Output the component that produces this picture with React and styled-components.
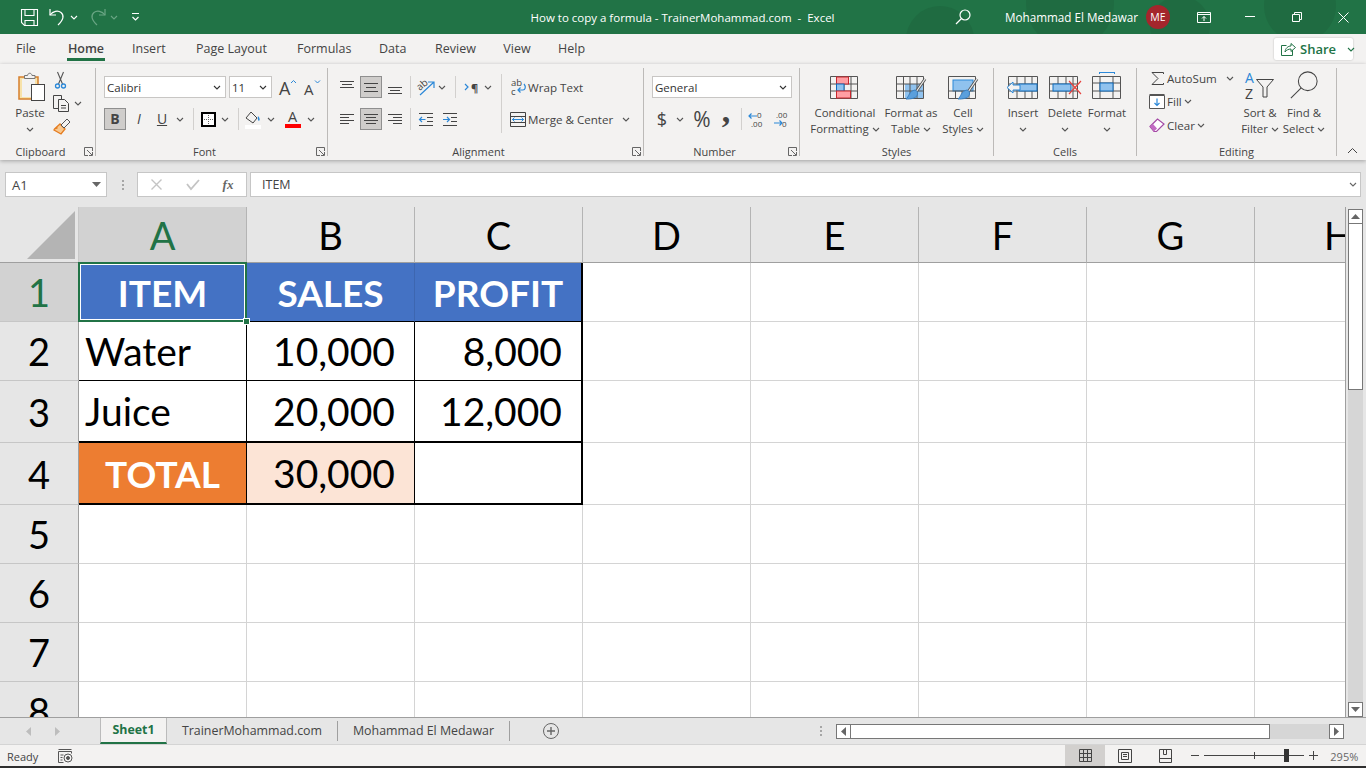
import React from 'react'
import styled, { createGlobalStyle } from 'styled-components'

const GlobalStyle = createGlobalStyle`
  html, body {
    margin: 0;
    padding: 0;
    background: #e6e6e6;
  }
  * { box-sizing: border-box; }
  svg { overflow: visible; }
`

const UI_FONT = '"Open Sans", "Noto Sans", sans-serif'
const CELL_FONT = 'Lato, "Open Sans", sans-serif'
const GREEN = '#217346'
const INK = '#444444'
const BLUE = '#2b88d8'
const PALE = '#90c2ee'

const Window = styled.div`
  width: 1366px;
  height: 768px;
  overflow: hidden;
  display: flex;
  flex-direction: column;
  font-family: ${UI_FONT};
  font-size: 12px;
  color: ${INK};
  background: #e6e6e6;
`

/* title bar */
const TitleBar = styled.div`
  position: relative;
  height: 34px;
  flex: none;
  display: flex;
  align-items: center;
  background: ${GREEN};
  color: #fff;
  overflow: hidden;
`
const TitleDecor = styled.svg`
  position: absolute;
  left: 880px;
  top: 0;
  overflow: hidden;
`
const QuickAccess = styled.div`
  position: relative;
  width: 530px;
  display: flex;
  align-items: center;
`
const Slot = styled.div`
  position: relative;
  flex: none;
  width: ${p => p.$w}px;
  margin-left: ${p => p.$ml || 0}px;
  display: flex;
  align-items: center;
  justify-content: center;
  height: ${p => (p.$h ? `${p.$h}px` : 'auto')};
`
const TitleText = styled.div`
  position: relative;
  width: 305px;
  font-size: 11.5px;
  white-space: pre;
  text-align: center;
`
const UserName = styled.div`
  position: relative;
  width: 130px;
  margin-left: 33px;
  font-size: 11.7px;
  white-space: nowrap;
`
const Avatar = styled.div`
  position: relative;
  width: 24px;
  height: 24px;
  margin-left: 11px;
  border-radius: 50%;
  background: #a4262c;
  font-size: 10.5px;
  display: flex;
  align-items: center;
  justify-content: center;
`

/* tab row */
const TabRow = styled.div`
  height: 30px;
  flex: none;
  display: flex;
  align-items: flex-start;
  background: #f3f2f1;
`
const Tab = styled.div`
  position: relative;
  flex: none;
  width: ${p => p.$w}px;
  margin-left: ${p => p.$ml}px;
  height: 27px;
  padding-top: 5px;
  text-align: center;
  white-space: nowrap;
  font-size: 12.5px;
  line-height: 20px;
  font-weight: ${p => (p.$active ? 600 : 400)};
  color: #444;
  border-bottom: ${p => (p.$active ? `3px solid ${GREEN}` : 'none')};
`
const ShareButton = styled.div`
  margin-left: auto;
  margin-right: 13px;
  margin-top: 4px;
  width: 79px;
  height: 22px;
  background: #fff;
  border-radius: 2px;
  box-shadow: 0 0 2px rgba(0, 0, 0, 0.25);
  display: flex;
  align-items: center;
  padding-left: 7px;
  gap: 4px;
  color: ${GREEN};
  font-weight: 600;
  font-size: 13px;
`

/* ribbon */
const Ribbon = styled.div`
  position: relative;
  height: 96px;
  flex: none;
  display: flex;
  background: #f3f2f1;
  box-shadow: 0 1px 4px rgba(0, 0, 0, 0.3);
`
const Group = styled.div`
  flex: none;
  width: ${p => p.$w}px;
  display: flex;
  flex-direction: column;
`
const GroupBody = styled.div`
  height: 80px;
  display: flex;
`
const GroupFoot = styled.div`
  display: grid;
  grid-template-columns: ${p => (p.$plain ? '1fr' : '1fr auto')};
  align-items: center;
  height: 15px;
  font-size: 11px;
  text-align: center;
  color: #444;
`
const Launcher = styled.div`
  width: 14px;
  display: flex;
  justify-content: center;
`
const GroupLine = styled.div`
  flex: none;
  width: 1px;
  margin: 4px 0 4px;
  background: #bcbab8;
`
const Stack = styled.div`
  display: flex;
  flex-direction: column;
  gap: ${p => p.$gap ?? 10}px;
  padding-top: ${p => p.$top ?? 12}px;
  width: ${p => (p.$w ? `${p.$w}px` : 'auto')};
  margin-left: ${p => p.$ml || 0}px;
  flex: none;
`
const ToolRow = styled.div`
  display: flex;
  align-items: center;
  height: ${p => p.$h || 22}px;
`
const Pressed = styled(Slot)`
  height: 22px;
  background: #cfcdcb;
  border: 1px solid #8f8f8f;
`
const ToolSep = styled.div`
  flex: none;
  width: 1px;
  height: 22px;
  margin-left: ${p => p.$ml || 0}px;
  background: #d2d0ce;
`
const TallSep = styled.div`
  flex: none;
  width: 1px;
  height: 59px;
  margin-top: 10px;
  background: #d2d0ce;
`
const Combo = styled.div`
  flex: none;
  width: ${p => p.$w}px;
  margin-left: ${p => p.$ml || 0}px;
  height: 22px;
  background: #fff;
  border: 1px solid #c8c6c4;
  display: flex;
  align-items: center;
  justify-content: space-between;
  padding: 0 4px 0 2px;
  font-size: 11.5px;
  color: #333;
`
const ToolText = styled.span`
  margin-left: ${p => p.$ml ?? 2}px;
  font-size: 11.6px;
  white-space: nowrap;
  color: #444;
`
const PasteLabel = styled.div`
  margin-top: 4px;
  font-size: 11.6px;
  line-height: 16px;
  text-align: center;
  color: #444;
`
const BigButton = styled.div`
  flex: none;
  width: ${p => p.$w}px;
  margin-left: ${p => p.$ml || 0}px;
  padding-top: ${p => p.$pt ?? 12}px;
  display: flex;
  flex-direction: column;
  align-items: center;
  font-size: 11.4px;
  line-height: 16px;
  white-space: nowrap;
  color: #444;
`
const BigIcon = styled.div`
  height: ${p => p.$h || 24}px;
  margin-bottom: 5px;
  display: flex;
  justify-content: center;
`
const ChevLine = styled.div`
  height: 16px;
  display: flex;
  align-items: center;
  justify-content: center;
  gap: 3px;
`
const Glyph = styled.span`
  font-size: ${p => p.$size}px;
  font-weight: ${p => p.$weight || 400};
  font-style: ${p => (p.$italic ? 'italic' : 'normal')};
  font-family: ${p => p.$font || 'inherit'};
  color: ${p => p.$color || '#444'};
  line-height: 1;
  text-decoration: ${p => (p.$under ? 'underline' : 'none')};
`
const CommaGlyph = styled(Glyph)`
  margin-top: -16px;
`

/* formula bar */
const FormulaBar = styled.div`
  height: 47px;
  flex: none;
  display: flex;
  align-items: flex-start;
  padding-top: 12px;
  background: #e6e6e6;
`
const FieldBox = styled.div`
  flex: none;
  height: 25px;
  width: ${p => (p.$w ? `${p.$w}px` : 'auto')};
  margin-left: ${p => p.$ml || 0}px;
  background: #fff;
  border: 1px solid #c6c6c6;
  display: flex;
  align-items: center;
  font-size: 13px;
  color: #444;
`
const NameBox = styled(FieldBox)`
  justify-content: space-between;
  padding: 0 5px 0 6px;
`
const FormulaInput = styled(FieldBox)`
  flex-grow: 1;
  margin-right: 5px;
  padding: 0 3px 0 11px;
  justify-content: space-between;
  font-size: 12.5px;
`
const Dots = styled.div`
  flex: none;
  width: 2px;
  height: 10px;
  margin-top: 8px;
  margin-left: ${p => p.$ml}px;
  background: repeating-linear-gradient(#a6a6a6 0 2px, transparent 2px 4px);
`

/* sheet */
const SheetArea = styled.div`
  flex: none;
  height: 510px;
  display: flex;
`
const Grid = styled.div`
  width: 1346px;
  height: 510px;
  overflow: hidden;
  display: grid;
  grid-template-columns: 79px repeat(8, 168px);
  grid-template-rows: 56px 59px 59px 62px 62px 59px 59px 59px 59px;
  background: #fff;
  border-right: 1px solid #9f9f9f;
`
const Corner = styled.div`
  background: #e6e6e6;
  border-right: 1px solid #c8c8c8;
  border-bottom: 1px solid #9f9f9f;
  padding: 4px 3px 3px 27px;
  svg { display: block; }
`
const ColHead = styled.div`
  background: ${p => (p.$active ? '#d2d2d2' : '#e6e6e6')};
  color: ${p => (p.$active ? GREEN : '#000')};
  border-right: 1px solid #b4b4b4;
  border-bottom: 1px solid #9f9f9f;
  font-family: ${CELL_FONT};
  font-size: 38px;
  display: flex;
  align-items: center;
  justify-content: center;
`
const RowHead = styled.div`
  background: ${p => (p.$active ? '#d2d2d2' : '#e6e6e6')};
  color: ${p => (p.$active ? GREEN : '#000')};
  border-right: 1px solid #9f9f9f;
  border-bottom: 1px solid #c6c6c6;
  font-family: ${CELL_FONT};
  font-size: 38px;
  display: flex;
  align-items: center;
  justify-content: center;
`
const Cell = styled.div`
  position: relative;
  z-index: ${p => (p.$selected ? 2 : 0)};
  background: ${p => p.$bg || '#fff'};
  color: ${p => p.$color || '#000'};
  border-right: ${p => p.$rw || 1}px solid ${p => p.$rc || '#d4d4d4'};
  border-bottom: ${p => p.$bw || 1}px solid ${p => p.$bc || '#d4d4d4'};
  font-family: ${CELL_FONT};
  font-size: ${p => (p.$bold ? 37 : 39)}px;
  font-weight: ${p => (p.$bold ? 700 : 400)};
  display: flex;
  align-items: center;
  justify-content: ${p => (p.$align === 'right' ? 'flex-end' : p.$align === 'center' ? 'center' : 'flex-start')};
  padding: 0 ${p => (p.$align === 'right' ? 19 : 0)}px 0 ${p => (p.$align === 'left' ? 6 : 0)}px;
  white-space: nowrap;
`
const Selection = styled.div`
  position: absolute;
  left: -1px;
  top: -1px;
  right: -1px;
  bottom: -1px;
  border: 2px solid ${GREEN};
  box-shadow: inset 0 0 0 1px #fff;
`
const FillHandle = styled.div`
  position: absolute;
  right: -5px;
  bottom: -5px;
  width: 7px;
  height: 7px;
  background: ${GREEN};
  border: 1px solid #fff;
`
const VScroll = styled.div`
  flex: none;
  width: 20px;
  display: flex;
  flex-direction: column;
  padding: 2px 3px 0 2px;
`
const ScrollButton = styled.div`
  flex: none;
  width: 15px;
  height: 15px;
  background: #fff;
  border: 1px solid #777;
  display: flex;
  align-items: center;
  justify-content: center;
`
const VThumb = styled.div`
  flex: none;
  height: 166px;
  background: #fff;
  border: 1px solid #777;
  border-top: none;
`
const VTrack = styled.div`
  flex: 1;
  background: #d6d6d6;
`

/* sheet tabs */
const SheetTabs = styled.div`
  height: 28px;
  flex: none;
  display: flex;
  align-items: flex-start;
  background: #e6e6e6;
  border-top: 1px solid #9f9f9f;
  border-bottom: 1px solid #d4d4d4;
`
const SheetTab = styled.div`
  flex: none;
  width: ${p => p.$w}px;
  margin-left: ${p => p.$ml || 0}px;
  height: ${p => (p.$active ? '26px' : '20px')};
  margin-top: ${p => (p.$active ? '0' : '3px')};
  padding-bottom: ${p => (p.$active ? '1px' : '0')};
  display: flex;
  align-items: center;
  justify-content: center;
  font-size: 12.4px;
  line-height: 16px;
  white-space: nowrap;
  color: ${p => (p.$active ? GREEN : '#444')};
  font-weight: ${p => (p.$active ? 700 : 400)};
  background: ${p => (p.$active ? '#f3f2f1' : 'transparent')};
  border-left: ${p => (p.$active ? '1px solid #bbb' : 'none')};
  border-right: ${p => (p.$active ? '1px solid #bbb' : '1px solid #9f9f9f')};
  border-bottom: ${p => (p.$active ? `2px solid ${GREEN}` : 'none')};
`
const HScroll = styled.div`
  flex: none;
  width: 508px;
  height: 15px;
  margin-left: 14px;
  margin-top: 6px;
  display: flex;
`
const HThumb = styled.div`
  flex: none;
  width: 419px;
  background: #fff;
  border: 1px solid #777;
  border-left: none;
`
const HTrack = styled.div`
  flex: 1;
  background: #d6d6d6;
`

/* status bar */
const StatusBar = styled.div`
  height: 21px;
  flex: none;
  display: flex;
  align-items: center;
  background: #f3f2f1;
  font-size: 11px;
`
const StatusText = styled.span`
  margin-left: ${p => p.$ml}px;
  padding-top: 2px;
  font-size: 11px;
  white-space: nowrap;
  color: ${p => p.$color || '#444'};
`
const ViewButton = styled(Slot)`
  height: 21px;
  background: ${p => (p.$active ? '#d2d0ce' : 'transparent')};
`
const ZoomTrack = styled.div`
  position: relative;
  flex: none;
  width: 100px;
  height: 1px;
  margin-left: 5px;
  background: #444;
`
const ZoomTick = styled.div`
  position: absolute;
  left: 50px;
  top: -3px;
  width: 1px;
  height: 7px;
  background: #444;
`
const ZoomThumb = styled.div`
  position: absolute;
  left: 80px;
  top: -6px;
  width: 5px;
  height: 13px;
  background: #333;
`
const BottomEdge = styled.div`
  height: 2px;
  flex: none;
  background: #2f2f2f;
`

/* icons */
const Chev = ({ color = '#555' }) => (
  <svg width="8" height="5" viewBox="0 0 8 5" fill="none">
    <path d="M1 1l3 3 3-3" stroke={color} strokeWidth="1.1" />
  </svg>
)

const LaunchIcon = () => (
  <svg width="9" height="9" viewBox="0 0 9 9" fill="none" stroke="#666">
    <path d="M8.5 4V.5H.5v8H4" />
    <path d="M3 3l5 5M8.5 5v3.5H5" />
  </svg>
)

const SaveIcon = () => (
  <svg width="17" height="17" viewBox="0 0 17 17" fill="none" stroke="#fff" strokeWidth="1.1">
    <path d="M.5.5h16v16H3.5l-3-3z" />
    <path d="M4 .5v6h9v-6M4 16.5v-5h9v5" />
  </svg>
)
const UndoIcon = ({ color = '#fff' }) => (
  <svg width="18" height="18" viewBox="0 0 18 18" fill="none" stroke={color} strokeWidth="1.2">
    <path d="M1 1v6h6" />
    <path d="M1 7c3-4 8-5 11-2.500 3.500 3 2.500 7-3 12.500" />
  </svg>
)
const RedoIcon = ({ color }) => (
  <svg width="18" height="18" viewBox="0 0 18 18" fill="none" stroke={color} strokeWidth="1.2">
    <path d="M17 1v6h-6" />
    <path d="M17 7c-3-4-8-5-11-2.500-3.500 3-2.500 7 3 12.500" />
  </svg>
)
const CustomizeIcon = () => (
  <svg width="9" height="9" viewBox="0 0 9 9" fill="none" stroke="#fff">
    <path d="M1 .5h7" />
    <path d="M1.500 4l3 3 3-3" strokeWidth="1.2" />
  </svg>
)
const SearchIcon = ({ size = 16, color = '#fff', sw = 1.2 }) => (
  <svg width={size} height={size} viewBox="0 0 16 16" fill="none" stroke={color} strokeWidth={sw}>
    <circle cx="10" cy="6" r="5" />
    <path d="M6.500 9.500L1 15" />
  </svg>
)
const RibbonModeIcon = () => (
  <svg width="14" height="11" viewBox="0 0 14 11" fill="none" stroke="#fff">
    <path d="M.5.500h13v10H.5zM.5 2.500h13M7 9V4.500M5 6.500l2-2 2 2" />
  </svg>
)
const MinIcon = ({ color = '#fff', w = 10 }) => (
  <svg width={w} height="2" viewBox={`0 0 ${w} 2`}><path d={`M0 .5h${w}`} stroke={color} /></svg>
)
const RestoreIcon = () => (
  <svg width="10" height="10" viewBox="0 0 10 10" fill="none" stroke="#fff">
    <path d="M.5 2.500h7v7h-7zM2.500 2.500v-2h7v7h-2" />
  </svg>
)
const CloseIcon = () => (
  <svg width="11" height="11" viewBox="0 0 11 11" fill="none" stroke="#fff">
    <path d="M.5.500l10 10M10.500.500l-10 10" />
  </svg>
)
const ShareIcon = () => (
  <svg width="15" height="14" viewBox="0 0 15 14" fill="none" stroke={GREEN}>
    <path d="M5.500 3.500h-5v10h11V8" />
    <path d="M4 10c.5-4 3-6 6-6V1.500l4.500 4-4.500 4V7c-2.500 0-4.500 1-6 3z" />
  </svg>
)

const PasteIcon = () => (
  <svg width="28" height="30" viewBox="0 0 28 30" fill="none">
    <rect x="1" y="6" width="19" height="22" fill="#f7e2a9" stroke="#d67f2c" strokeWidth="1.5" />
    <rect x="4" y="8" width="13" height="18" fill="#f3f2f1" />
    <path d="M6.500 7.500V4.500h3c.5-3 4-3 4.500 0h3v3z" fill="#f3f2f1" stroke="#777" />
    <rect x="13.500" y="13.500" width="13" height="16" fill="#fff" stroke="#444" />
  </svg>
)
const ScissorsIcon = () => (
  <svg width="11" height="17" viewBox="0 0 11 17" fill="none">
    <path d="M2.500 0l5 12M8.500 0l-5 12" stroke="#555" strokeWidth="1.100" />
    <circle cx="2.500" cy="14" r="2" stroke={BLUE} strokeWidth="1.300" />
    <circle cx="8.500" cy="14" r="2" stroke={BLUE} strokeWidth="1.300" />
  </svg>
)
const CopyIcon = () => (
  <svg width="17" height="17" viewBox="0 0 17 17" fill="#f3f2f1" stroke="#444">
    <path d="M.5.500h8v13h-8z" />
    <path d="M5.500 4.500h6l4 4v8h-10z" />
    <path d="M8 10.500h5M8 13h5" />
  </svg>
)
const BrushIcon = () => (
  <svg width="18" height="17" viewBox="0 0 18 17" fill="none">
    <path d="M7 6l5 5-4 5-7-4 .5-1 3-1-2 0z" fill="#f8c88f" stroke="#e57c1f" strokeWidth="1.300" />
    <path d="M8 7l6-6 3 3-6 6z" fill="#f3f2f1" stroke="#555" />
  </svg>
)
const GrowIcon = ({ up }) => (
  <svg width="16" height="17" viewBox="0 0 16 17" fill="none">
    <text x="0" y="16" fontSize={up ? 18 : 15} fontFamily="'Open Sans', sans-serif" fill="#444">A</text>
    <path d={up ? 'M12 4l2.500-2.500L17 4' : 'M11 1.500l2.500 2.500L16 1.500'} stroke={BLUE} />
  </svg>
)
const BorderIcon = () => (
  <svg width="15" height="15" viewBox="0 0 15 15" fill="#fff">
    <rect x="1" y="1" width="13" height="13" stroke="#000" strokeWidth="2" />
    <path d="M7.500 3v9M3 7.500h9" stroke="#666" strokeDasharray="1 1" />
  </svg>
)
const FillIcon = () => (
  <svg width="17" height="19" viewBox="0 0 17 19" fill="none">
    <path d="M1 8l5-6 6 6-4 5z" stroke="#444" />
    <path d="M13 6c2 2 2 4 1 5-1 0-1.500-3-1-5z" fill={BLUE} />
    <rect x="0" y="15" width="16" height="4" fill="#fff" />
  </svg>
)
const FontColorIcon = () => (
  <svg width="16" height="18" viewBox="0 0 16 18" fill="none">
    <text x="3" y="12" fontSize="14.500" fontFamily="'Open Sans', sans-serif" fill="#444">A</text>
    <rect x="0" y="14" width="16" height="4" fill="#f00" />
  </svg>
)

const Lines = ({ w = 14, rows }) => (
  <svg width={w} height="15" viewBox={`0 0 ${w} 15`} stroke="#444" fill="none">
    {rows.map(([y, a, b]) => <path key={y} d={`M${a} ${y + 0.5}H${b}`} />)}
  </svg>
)
const OrientIcon = () => (
  <svg width="18" height="17" viewBox="0 0 18 17" fill="none">
    <text x="0" y="9" fontSize="10" fontFamily="'Open Sans', sans-serif" fill="#444" transform="rotate(-40 5 8)">ab</text>
    <path d="M2 16L16 3M10 3h6v6" stroke={BLUE} strokeWidth="1.200" />
  </svg>
)
const IndentMark = () => (
  <svg width="14" height="13" viewBox="0 0 14 13" fill="none">
    <path d="M0 3l3 3-3 3" stroke={BLUE} strokeWidth="1.200" />
    <text x="6" y="11" fontSize="11" fontWeight="700" fontFamily="'Open Sans', sans-serif" fill="#444">¶</text>
  </svg>
)
const IndentIcon = ({ flip }) => (
  <svg width="14" height="15" viewBox="0 0 14 15" fill="none">
    <path d="M0 1.500h14M0 13.500h14" stroke="#444" />
    <path d="M8 5.500h6M8 9.500h6" stroke="#444" />
    <path d={flip ? 'M0 7.500h6M4 5l2.500 2.500L4 10' : 'M6.500 7.500h-6M3 5L.5 7.500 3 10'} stroke={BLUE} strokeWidth="1.200" />
  </svg>
)
const WrapIcon = () => (
  <svg width="15" height="18" viewBox="0 0 15 18" fill="none">
    <text x="0" y="8" fontSize="9.500" fontFamily="'Open Sans', sans-serif" fill="#444">ab</text>
    <text x="0" y="17" fontSize="9.500" fontFamily="'Open Sans', sans-serif" fill="#444">c</text>
    <path d="M13 6c2.500 3 1 6-1 6H7M9.500 9.500L7 12l2.500 2.500" stroke={BLUE} strokeWidth="1.200" />
  </svg>
)
const MergeIcon = () => (
  <svg width="16" height="15" viewBox="0 0 16 15" fill="none">
    <path d="M.5.500h15v14H.5zM.5 4.500h15M.5 10.500h15" stroke="#444" />
    <path d="M2 7.500h12M4.500 5.500l-2 2 2 2M11.500 5.500l2 2-2 2" stroke={BLUE} />
  </svg>
)
const DecimalIcon = ({ more }) => (
  <svg width="18" height="17" viewBox="0 0 18 17" fill="none">
    <text x={more ? 3 : 9} y="7" fontSize="8" fontFamily="'Open Sans', sans-serif" fill="#444">{more ? '.00' : '0'}</text>
    <text x={more ? 9 : 3} y="16" fontSize="8" fontFamily="'Open Sans', sans-serif" fill="#444">{more ? '0' : '.00'}</text>
    <path d={more ? 'M1 12h8M6.500 9.500L9 12l-2.500 2.500' : 'M9 5H1M3.500 2.500L1 5l2.500 2.500'} stroke={BLUE} strokeWidth="1.200" />
  </svg>
)

const TableGrid = ({ children, w = 28, h = 23 }) => (
  <svg width={w + 2} height={h + 1} viewBox={`0 0 ${w + 2} ${h + 1}`} fill="none">
    {children}
  </svg>
)
const gridLines = 'M.5.500h27v22H.5zM.5 8h27M.5 15h27M7.500.500v22M14 .500v22M21 .500v22'

const CondIcon = () => (
  <TableGrid>
    <path d={gridLines} stroke="#555" />
    <rect x="6.500" y="1" width="12" height="7" fill="#ff9ea3" stroke="#c8282e" />
    <rect x="6.500" y="8" width="7.500" height="7" fill={PALE} stroke="#0f6cbd" />
    <rect x="6.500" y="15" width="14" height="7" fill="#ff9ea3" stroke="#c8282e" />
  </TableGrid>
)
const PaintOver = () => (
  <>
    <path d="M29 3L20 16" stroke="#555" strokeWidth="3" />
    <path d="M29 3L20 16" stroke="#f3f2f1" strokeWidth="1.200" />
    <path d="M19 14c4 1 3 7-1 8-3 1-6 1-8 1 3-2 3-8 9-9z" fill="#5a9fdc" stroke="#3a7fc0" />
  </>
)
const TableStyleIcon = () => (
  <TableGrid>
    <rect x="9" y="8" width="18" height="15" fill={PALE} />
    <path d={gridLines} stroke="#555" />
    <PaintOver />
  </TableGrid>
)
const CellStyleIcon = () => (
  <TableGrid>
    <rect x="5" y="4" width="20" height="11" fill={PALE} stroke={BLUE} />
    <path d="M.5.500h27v22H.5zM.5 15h27M7.500 15v8M14 15v8M21 15v8" stroke="#555" />
    <PaintOver />
  </TableGrid>
)
const InsertIcon = () => (
  <TableGrid w={30}>
    <path d="M1.500 .5h29v22h-29zM1.500 8h29M1.500 15h29M10 1v21M18 1v21M25 1v21" stroke="#555" />
    <rect x="12" y="8" width="18" height="7" fill={PALE} stroke="#0f6cbd" />
    <path d="M0 11.500L6 6v3h7v5H6v3z" fill="#f3f2f1" stroke={BLUE} />
  </TableGrid>
)
const DeleteIcon = () => (
  <TableGrid w={30}>
    <path d="M.5 .5h28v22H.5zM.5 8h28M.5 15h28M9 1v21M17 1v21M24 1v21" stroke="#555" />
    <rect x="4" y="8" width="18" height="7" fill={PALE} stroke="#0f6cbd" />
    <path d="M20 5l12 13M32 5L20 18" stroke="#e8433f" strokeWidth="1.200" />
  </TableGrid>
)
const FormatSvg = styled.svg`
  margin-top: -4px;
`
const FormatIcon = () => (
  <FormatSvg width="30" height="28" viewBox="0 0 30 28" fill="none">
    <path d="M7.500 .5h15M7.500 0v2M22.500 0v2" stroke={BLUE} />
    <path d="M.5 4.500h28v22H.5zM.5 11h28M.5 19h28M8 4v23M21 4v23" stroke="#555" />
    <rect x="8" y="11" width="13" height="8" fill={PALE} stroke="#0f6cbd" />
  </FormatSvg>
)
const SumIcon = () => (
  <svg width="13" height="13" viewBox="0 0 13 13" fill="none" stroke="#444">
    <path d="M12.500 2V.5H1L7 6.500 1 12.500h11.500V11" />
  </svg>
)
const FillDownIcon = () => (
  <svg width="16" height="15" viewBox="0 0 16 15" fill="none">
    <path d="M.5 1.500h15v13H.5z" stroke="#555" fill="#fff" />
    <path d="M.5.500h15" stroke="#555" />
    <path d="M8 4.500v7M5.500 9L8 11.500 10.500 9" stroke={BLUE} strokeWidth="1.200" />
  </svg>
)
const EraserIcon = () => (
  <svg width="16" height="14" viewBox="0 0 16 14" fill="none">
    <path d="M1 8.500L8.500 1l6.500 5-7.500 7.500H5z" fill="#fff" stroke="#a349a4" strokeWidth="1.200" />
    <path d="M1 8.500L5 13.500 8 10.500 4 6z" fill="#c26cc3" />
  </svg>
)
const SortIcon = () => (
  <svg width="30" height="30" viewBox="0 0 30 30" fill="none">
    <text x="0" y="13" fontSize="14" fontFamily="'Open Sans', sans-serif" fill={BLUE}>A</text>
    <text x="0" y="29" fontSize="14" fontFamily="'Open Sans', sans-serif" fill="#444">Z</text>
    <path d="M11.500 9.500h17l-6.500 7.500v10h-4V17z" stroke="#444" />
  </svg>
)

const NormalIcon = () => (
  <svg width="13" height="13" viewBox="0 0 13 13" fill="none" stroke="#444">
    <path d="M.5.500h12v12H.5zM.5 4.500h12M.5 8.500h12M4.500.500v12M8.500.500v12" />
  </svg>
)
const PageIcon = () => (
  <svg width="14" height="14" viewBox="0 0 14 14" fill="none" stroke="#444">
    <path d="M.5.500h13v13H.5zM3.500 3.500h7v7h-7zM5 5.500h4M5 7.500h4" />
  </svg>
)
const BreakIcon = () => (
  <svg width="13" height="14" viewBox="0 0 13 14" fill="none" stroke="#444">
    <path d="M.5.500h12v13H.5zM.5 9.500h12M4.500.500v5h3v-5" />
  </svg>
)
const MacroIcon = () => (
  <svg width="15" height="14" viewBox="0 0 15 14" fill="none" stroke="#555">
    <path d="M.5.500h13M.5 2.500h13v2M.5 2.500v11h5M2.500 6h3M2.500 8.500h2M2.500 11h2" />
    <circle cx="10" cy="9" r="4" />
    <circle cx="10" cy="9" r="1.500" fill="#555" />
  </svg>
)
const PlusIcon = () => (
  <svg width="9" height="9" viewBox="0 0 9 9"><path d="M0 4.500h9M4.500 0v9" stroke="#444" /></svg>
)
const Tri = ({ dir, color = '#666' }) => {
  const d = { up: 'M0 5L4.500 0 9 5z', down: 'M0 0h9L4.500 5z', left: 'M5 0v9L0 4.500z', right: 'M0 0v9l5-4.500z' }[dir]
  const wide = dir === 'up' || dir === 'down'
  return (
    <svg width={wide ? 9 : 5} height={wide ? 5 : 9} viewBox={wide ? '0 0 9 5' : '0 0 5 9'}>
      <path d={d} fill={color} />
    </svg>
  )
}

const TABS = [
  ['File', 16, 20],
  ['Home', 31, 38],
  ['Insert', 27, 33],
  ['Page Layout', 30, 73],
  ['Formulas', 29, 53],
  ['Data', 29, 27],
  ['Review', 29, 41],
  ['View', 27, 28],
  ['Help', 27, 27],
]

const COLS = ['A', 'B', 'C', 'D', 'E', 'F', 'G', 'H']

const black = { $rc: '#000', $bc: '#000' }

const TABLE = [
  [
    { text: 'ITEM', $bg: '#4472c4', $color: '#fff', $bold: true, $align: 'center', $rc: '#4472c4', $bc: '#000', $selected: true },
    { text: 'SALES', $bg: '#4472c4', $color: '#fff', $bold: true, $align: 'center', $rc: '#3d66b0', $bc: '#000' },
    { text: 'PROFIT', $bg: '#4472c4', $color: '#fff', $bold: true, $align: 'center', $rc: '#000', $rw: 2, $bc: '#000' },
  ],
  [
    { text: 'Water', $align: 'left', ...black },
    { text: '10,000', $align: 'right', ...black },
    { text: '8,000', $align: 'right', ...black, $rw: 2 },
  ],
  [
    { text: 'Juice', $align: 'left', ...black, $bw: 2 },
    { text: '20,000', $align: 'right', ...black, $bw: 2 },
    { text: '12,000', $align: 'right', ...black, $rw: 2, $bw: 2 },
  ],
  [
    { text: 'TOTAL', $bg: '#ed7d31', $color: '#fff', $bold: true, $align: 'center', ...black, $bw: 2 },
    { text: '30,000', $bg: '#fce4d6', $align: 'right', ...black, $bw: 2 },
    { text: '', ...black, $rw: 2, $bw: 2 },
  ],
]

const RibbonBar = () => (
  <Ribbon>
    <Group $w={95}>
      <GroupBody>
        <Stack $w={30} $ml={15} $top={7} $gap={0}>
          <Slot $w={28} $ml={3} $h={30}><PasteIcon /></Slot>
          <PasteLabel>Paste</PasteLabel>
          <ChevLine><Chev /></ChevLine>
        </Stack>
        <Stack $ml={8} $top={8} $gap={6}>
          <ToolRow $h={17}><Slot $w={15}><ScissorsIcon /></Slot></ToolRow>
          <ToolRow $h={17}><Slot $w={17}><CopyIcon /></Slot><Slot $w={8} $ml={4}><Chev /></Slot></ToolRow>
          <ToolRow $h={17}><Slot $w={18}><BrushIcon /></Slot></ToolRow>
        </Stack>
      </GroupBody>
      <GroupFoot><span>Clipboard</span><Launcher><LaunchIcon /></Launcher></GroupFoot>
    </Group>
    <GroupLine />

    <Group $w={231}>
      <GroupBody>
        <Stack>
          <ToolRow>
            <Combo $w={122} $ml={8}><span>Calibri</span><Chev color="#333" /></Combo>
            <Combo $w={43} $ml={3}><span>11</span><Chev color="#333" /></Combo>
            <Slot $w={18} $ml={6}><GrowIcon up /></Slot>
            <Slot $w={16} $ml={8}><GrowIcon /></Slot>
          </ToolRow>
          <ToolRow>
            <Pressed $w={22} $ml={8}><Glyph $size={14} $weight={700}>B</Glyph></Pressed>
            <Slot $w={26}><Glyph $size={14} $italic>I</Glyph></Slot>
            <Slot $w={20}><Glyph $size={14} $under>U</Glyph></Slot>
            <Slot $w={16}><Chev /></Slot>
            <ToolSep $ml={5} />
            <Slot $w={20} $ml={4}><BorderIcon /></Slot>
            <Slot $w={14}><Chev /></Slot>
            <ToolSep $ml={6} />
            <Slot $w={19} $ml={5}><FillIcon /></Slot>
            <Slot $w={16}><Chev /></Slot>
            <Slot $w={28}><FontColorIcon /></Slot>
            <Slot $w={8}><Chev /></Slot>
          </ToolRow>
        </Stack>
      </GroupBody>
      <GroupFoot><span>Font</span><Launcher><LaunchIcon /></Launcher></GroupFoot>
    </Group>
    <GroupLine />

    <Group $w={315}>
      <GroupBody>
        <Stack $w={173}>
          <ToolRow>
            <Slot $w={14} $ml={12}><Lines rows={[[1, 0, 14], [4, 2, 12], [7, 0, 14]]} /></Slot>
            <Pressed $w={22} $ml={6}><Lines rows={[[3, 0, 14], [7, 2, 12], [11, 0, 14]]} /></Pressed>
            <Slot $w={14} $ml={6}><Lines rows={[[7, 0, 14], [10, 2, 12], [13, 0, 14]]} /></Slot>
            <ToolSep $ml={8} />
            <Slot $w={18} $ml={7}><OrientIcon /></Slot>
            <Slot $w={10} $ml={1}><Chev /></Slot>
            <ToolSep $ml={8} />
            <Slot $w={14} $ml={9}><IndentMark /></Slot>
            <Slot $w={10} $ml={4}><Chev /></Slot>
          </ToolRow>
          <ToolRow>
            <Slot $w={14} $ml={12}><Lines rows={[[2, 0, 14], [5, 0, 9], [8, 0, 14], [11, 0, 9]]} /></Slot>
            <Pressed $w={22} $ml={6}><Lines rows={[[2, 0, 14], [5, 2, 12], [8, 0, 14], [11, 2, 12]]} /></Pressed>
            <Slot $w={14} $ml={6}><Lines rows={[[2, 0, 14], [5, 5, 14], [8, 0, 14], [11, 5, 14]]} /></Slot>
            <ToolSep $ml={8} />
            <Slot $w={14} $ml={8}><IndentIcon /></Slot>
            <Slot $w={14} $ml={10}><IndentIcon flip /></Slot>
          </ToolRow>
        </Stack>
        <TallSep />
        <Stack>
          <ToolRow>
            <Slot $w={15} $ml={9}><WrapIcon /></Slot>
            <ToolText>Wrap Text</ToolText>
          </ToolRow>
          <ToolRow>
            <Slot $w={17} $ml={7}><MergeIcon /></Slot>
            <ToolText>Merge &amp; Center</ToolText>
            <Slot $w={8} $ml={9}><Chev /></Slot>
          </ToolRow>
        </Stack>
      </GroupBody>
      <GroupFoot><span>Alignment</span><Launcher><LaunchIcon /></Launcher></GroupFoot>
    </Group>
    <GroupLine />

    <Group $w={155}>
      <GroupBody>
        <Stack>
          <ToolRow><Combo $w={140} $ml={8}><span>General</span><Chev color="#333" /></Combo></ToolRow>
          <ToolRow>
            <Slot $w={20} $ml={8}><Glyph $size={18}>$</Glyph></Slot>
            <Slot $w={10} $ml={3}><Chev /></Slot>
            <Slot $w={20} $ml={7}><Glyph $size={21}>%</Glyph></Slot>
            <Slot $w={20} $ml={4}><CommaGlyph $size={34} $weight={700} $font='"Liberation Serif", serif'>,</CommaGlyph></Slot>
            <ToolSep $ml={5} />
            <Slot $w={18} $ml={6}><DecimalIcon /></Slot>
            <Slot $w={18} $ml={7}><DecimalIcon more /></Slot>
          </ToolRow>
        </Stack>
      </GroupBody>
      <GroupFoot><span>Number</span><Launcher><LaunchIcon /></Launcher></GroupFoot>
    </Group>
    <GroupLine />

    <Group $w={193}>
      <GroupBody>
        <BigButton $w={72} $ml={9}>
          <BigIcon><CondIcon /></BigIcon>
          <span>Conditional</span>
          <ChevLine>Formatting <Chev /></ChevLine>
        </BigButton>
        <BigButton $w={60}>
          <BigIcon><TableStyleIcon /></BigIcon>
          <span>Format as</span>
          <ChevLine>Table <Chev /></ChevLine>
        </BigButton>
        <BigButton $w={44}>
          <BigIcon><CellStyleIcon /></BigIcon>
          <span>Cell</span>
          <ChevLine>Styles <Chev /></ChevLine>
        </BigButton>
      </GroupBody>
      <GroupFoot $plain><span>Styles</span></GroupFoot>
    </Group>
    <GroupLine />

    <Group $w={142}>
      <GroupBody>
        <BigButton $w={42} $ml={8}>
          <BigIcon><InsertIcon /></BigIcon>
          <span>Insert</span>
          <ChevLine><Chev /></ChevLine>
        </BigButton>
        <BigButton $w={42}>
          <BigIcon><DeleteIcon /></BigIcon>
          <span>Delete</span>
          <ChevLine><Chev /></ChevLine>
        </BigButton>
        <BigButton $w={42}>
          <BigIcon><FormatIcon /></BigIcon>
          <span>Format</span>
          <ChevLine><Chev /></ChevLine>
        </BigButton>
      </GroupBody>
      <GroupFoot $plain><span>Cells</span></GroupFoot>
    </Group>
    <GroupLine />

    <Group $w={199}>
      <GroupBody>
        <Stack $w={90} $ml={11} $top={3} $gap={0}>
          <ToolRow $h={23}>
            <Slot $w={18}><SumIcon /></Slot>
            <ToolText $ml={1}>AutoSum</ToolText>
            <Slot $w={8} $ml={9}><Chev /></Slot>
          </ToolRow>
          <ToolRow $h={23}>
            <Slot $w={18}><FillDownIcon /></Slot>
            <ToolText $ml={1}>Fill</ToolText>
            <Slot $w={8} $ml={2}><Chev /></Slot>
          </ToolRow>
          <ToolRow $h={24}>
            <Slot $w={18}><EraserIcon /></Slot>
            <ToolText $ml={1}>Clear</ToolText>
            <Slot $w={8} $ml={2}><Chev /></Slot>
          </ToolRow>
        </Stack>
        <BigButton $w={44} $pt={6}>
          <BigIcon $h={30}><SortIcon /></BigIcon>
          <span>Sort &amp;</span>
          <ChevLine>Filter <Chev /></ChevLine>
        </BigButton>
        <BigButton $w={44} $pt={6}>
          <BigIcon $h={30}><SearchIcon size={30} color="#444" sw={0.55} /></BigIcon>
          <span>Find &amp;</span>
          <ChevLine>Select <Chev /></ChevLine>
        </BigButton>
      </GroupBody>
      <GroupFoot $plain><span>Editing</span></GroupFoot>
    </Group>
    <GroupLine />
    <Stack $ml={10} $top={83}>
      <svg width="11" height="7" viewBox="0 0 11 7" fill="none"><path d="M1 6l4.500-4.500L10 6" stroke="#444" /></svg>
    </Stack>
  </Ribbon>
)

const Sheet = () => (
  <Grid>
    <Corner>
      <svg width="48" height="48" viewBox="0 0 48 48"><path d="M48 0v48H0z" fill="#b4b4b4" /></svg>
    </Corner>
    {COLS.map((c, i) => <ColHead key={c} $active={i === 0}>{c}</ColHead>)}
    {Array.from({ length: 8 }, (_, r) => (
      <React.Fragment key={r}>
        <RowHead $active={r === 0}>{r + 1}</RowHead>
        {COLS.map((c, i) => {
          const cell = TABLE[r] && TABLE[r][i]
          if (!cell) return <Cell key={c} />
          const { text, ...props } = cell
          return (
            <Cell key={c} {...props}>
              {text}
              {cell.$selected && <Selection><FillHandle /></Selection>}
            </Cell>
          )
        })}
      </React.Fragment>
    ))}
  </Grid>
)

const App = () => (
  <Window>
    <GlobalStyle />
    <TitleBar>
      <TitleDecor width="486" height="34" viewBox="0 0 486 34">
        <circle cx="60" cy="40" r="34" fill="#1f6b41" />
        <circle cx="190" cy="4" r="44" fill="#1f6b41" />
        <circle cx="300" cy="26" r="30" fill="#1f6b41" />
        <circle cx="420" cy="6" r="36" fill="#1f6b41" />
      </TitleDecor>
      <QuickAccess>
        <Slot $w={17} $ml={21}><SaveIcon /></Slot>
        <Slot $w={18} $ml={11}><UndoIcon /></Slot>
        <Slot $w={8} $ml={3}><Chev color="#fff" /></Slot>
        <Slot $w={18} $ml={10}><RedoIcon color="#6aa584" /></Slot>
        <Slot $w={8} $ml={4}><Chev color="#6aa584" /></Slot>
        <Slot $w={9} $ml={13}><CustomizeIcon /></Slot>
      </QuickAccess>
      <TitleText>How to copy a formula - TrainerMohammad.com  -  Excel</TitleText>
      <Slot $w={18} $ml={119}><SearchIcon /></Slot>
      <UserName>Mohammad El Medawar</UserName>
      <Avatar>ME</Avatar>
      <Slot $w={46} $ml={11}><RibbonModeIcon /></Slot>
      <Slot $w={46}><MinIcon /></Slot>
      <Slot $w={47}><RestoreIcon /></Slot>
      <Slot $w={46}><CloseIcon /></Slot>
    </TitleBar>

    <TabRow>
      {TABS.map(([name, ml, w]) => (
        <Tab key={name} $ml={ml} $w={w} $active={name === 'Home'}>{name}</Tab>
      ))}
      <ShareButton>
        <ShareIcon />
        <span>Share</span>
        <Slot $w={8} $ml={7}><Chev color={GREEN} /></Slot>
      </ShareButton>
    </TabRow>

    <RibbonBar />

    <FormulaBar>
      <NameBox $w={102} $ml={5}>
        <span>A1</span><Tri dir="down" />
      </NameBox>
      <Dots $ml={15} />
      <FieldBox $w={110} $ml={13}>
        <Slot $w={12} $ml={12}>
          <svg width="11" height="11" viewBox="0 0 11 11" fill="none" stroke="#c4c4c4" strokeWidth="1.400"><path d="M.5.500l10 10M10.500.500l-10 10" /></svg>
        </Slot>
        <Slot $w={15} $ml={23}>
          <svg width="14" height="11" viewBox="0 0 14 11" fill="none" stroke="#c4c4c4" strokeWidth="1.800"><path d="M1 5l4 5 8-9" /></svg>
        </Slot>
        <Slot $w={16} $ml={20}><Glyph $size={13} $italic $weight={700} $font='"Liberation Serif", serif' $color="#666">fx</Glyph></Slot>
      </FieldBox>
      <FormulaInput $ml={3}>
        <span>ITEM</span>
        <Chev color="#666" />
      </FormulaInput>
    </FormulaBar>

    <SheetArea>
      <Sheet />
      <VScroll>
        <ScrollButton><Tri dir="up" /></ScrollButton>
        <VThumb />
        <VTrack />
        <ScrollButton><Tri dir="down" /></ScrollButton>
      </VScroll>
    </SheetArea>

    <SheetTabs>
      <Slot $w={5} $ml={26} $h={26}><Tri dir="left" color="#bdbdbd" /></Slot>
      <Slot $w={5} $ml={24} $h={26}><Tri dir="right" color="#bdbdbd" /></Slot>
      <SheetTab $active $w={67} $ml={40}>Sheet1</SheetTab>
      <SheetTab $w={171}>TrainerMohammad.com</SheetTab>
      <SheetTab $w={172}>Mohammad El Medawar</SheetTab>
      <Slot $w={16} $ml={33} $h={26}>
        <svg width="16" height="16" viewBox="0 0 16 16" fill="none" stroke="#666">
          <circle cx="8" cy="8" r="7.500" />
          <path d="M8 4v8M4 8h8" strokeWidth="1.400" />
        </svg>
      </Slot>
      <Dots $ml={261} />
      <HScroll>
        <ScrollButton><Tri dir="left" /></ScrollButton>
        <HThumb />
        <HTrack />
        <ScrollButton><Tri dir="right" /></ScrollButton>
      </HScroll>
    </SheetTabs>

    <StatusBar>
      <StatusText $ml={7}>Ready</StatusText>
      <Slot $w={15} $ml={20}><MacroIcon /></Slot>
      <ViewButton $active $w={40} $ml={992}><NormalIcon /></ViewButton>
      <ViewButton $w={40}><PageIcon /></ViewButton>
      <ViewButton $w={40}><BreakIcon /></ViewButton>
      <Slot $w={8} $ml={6}><MinIcon color="#444" w={8} /></Slot>
      <ZoomTrack>
        <ZoomTick />
        <ZoomThumb />
      </ZoomTrack>
      <Slot $w={9} $ml={5}><PlusIcon /></Slot>
      <StatusText $ml={12} $color="#666">295%</StatusText>
    </StatusBar>
    <BottomEdge />
  </Window>
)

export default App
